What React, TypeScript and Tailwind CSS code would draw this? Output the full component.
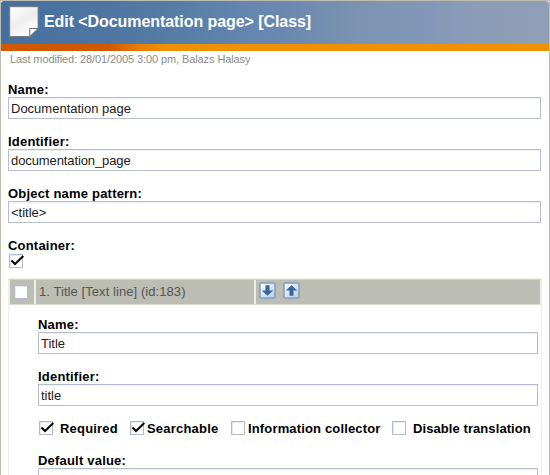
import React from 'react';

function Label({ children, tracking = 'tracking-[0.2px]' }: { children: React.ReactNode; tracking?: string }) {
  return <div className={`h-[15px] whitespace-nowrap text-[13px] font-bold leading-[15px] text-black ${tracking}`}>{children}</div>;
}

function Field({ value, tracking = 'tracking-[0px]' }: { value: string; tracking?: string }) {
  return (
    <div className={`h-[22px] whitespace-pre border border-[#b9bdd0] bg-white pl-[2px] text-[13px] leading-[21px] text-[#222] shadow-[inset_0_1px_0_#eef0f5] ${tracking}`}>
      {value}
    </div>
  );
}

function Check({ checked = false }: { checked?: boolean }) {
  return (
    <span className="block h-[14px] w-[14px] shrink-0 border border-[#b3bacb] bg-[#fdfdfe] shadow-[inset_1px_1px_0_#e6e9f0]">
      {checked && (
        <svg viewBox="0 0 14 12" className="block h-[12px] w-[14px] overflow-visible" fill="none" stroke="#080808" strokeWidth="2.1">
          <path d="M1.5 5.5 5 9 13.3 1" />
        </svg>
      )}
    </span>
  );
}

function Arrow({ up = false }: { up?: boolean }) {
  return (
    <svg viewBox="0 0 17 17" className="h-[17px] w-[17px]">
      <defs>
        <linearGradient id="button" x1="0" y1="0" x2="1" y2="1">
          <stop offset="0" stopColor="#fff" />
          <stop offset="1" stopColor="#b7cce3" />
        </linearGradient>
      </defs>
      <rect x="1" y="1" width="15" height="15" rx="1" fill="url(#button)" stroke="#7f9fc2" strokeWidth="1.5" />
      <path d="M6.5 3.2h4v5.3h3.7L8.5 13.8 2.8 8.5h3.7z" fill="#3a6699" transform={up ? 'rotate(180 8.5 8.5)' : undefined} />
    </svg>
  );
}

export default function App() {
  return (
    <div className="h-[475px] w-[550px] overflow-hidden border-l border-r border-t border-[#bdbdb0] bg-white font-['Liberation_Sans',Arial,sans-serif]">
      <header className="flex h-[43px] items-start rounded-t-[3px] bg-[linear-gradient(90deg,#456f9d_0%,#4f76a3_20%,#567da5_32%,#6586b1_46%,#6c89af_53%,#7b93b0_65%,#8398b8_78%,#8c9db7_88%,#8f9fb6_100%)] pl-2 pt-[5px]">
        <svg viewBox="0 0 30 32" className="h-[32px] w-[30px] shrink-0">
          <defs>
            <linearGradient id="paper" x1="0" y1="0" x2="0.6" y2="1">
              <stop offset="0" stopColor="#fff" />
              <stop offset="0.55" stopColor="#eeeeef" />
              <stop offset="1" stopColor="#fff" />
            </linearGradient>
          </defs>
          <path d="M.7.7h28.4v21.8l-8.3 8H.7z" fill="url(#paper)" stroke="#737b84" />
          <path d="M20.8 30.5v-8H29z" fill="#fff" stroke="#666d75" />
        </svg>
        <h1 className="ml-[5px] mt-[6px] whitespace-nowrap text-[16px] font-bold leading-5 tracking-[-0.07px] text-white">Edit &lt;Documentation page&gt; [Class]</h1>
      </header>
      <div className="h-[7px] bg-[linear-gradient(90deg,#d05800_0,#d05800_108px,#e87b08_135px,#f29100_165px)]" />
      <p className="ml-[9px] mt-[2px] h-[13px] whitespace-nowrap text-[11px] leading-[13px] tracking-[-0.1px] text-[#8b8b86]">Last modified: 28/01/2005 3:00 pm, Balazs Halasy</p>
      <main className="ml-[7px] mr-2 mt-[16px]">
        <section className="h-[52px]"><Label>Name:</Label><Field value="Documentation page" /></section>
        <section className="h-[52px]"><Label>Identifier:</Label><Field value="documentation_page" tracking="tracking-[-0.1px]" /></section>
        <section className="h-[52px]"><Label>Object name pattern:</Label><Field value="<title>" /></section>
        <section className="h-[40px]">
          <Label>Container:</Label>
          <div className="ml-px mt-px"><Check checked /></div>
        </section>
        <div className="-mr-px border border-[#efefe6]">
          <div className="flex h-[26px] gap-[2px] border-b border-t border-b-[#dcdcd1] border-t-[#d3d6c7] bg-[#eeeee6] pl-px pr-px">
            <div className="flex w-[24px] items-center bg-[#bcbdb4] pl-[4px]"><Check /></div>
            <div className="w-[218px] bg-[#bcbdb4] pl-[3px] text-[13px] leading-[24px] tracking-[0.07px] text-[#55564f]">1. Title [Text line] (id:183)</div>
            <div className="flex flex-1 gap-[7px] bg-[#bcbdb4] pl-[3px] pt-[2px]"><Arrow /><Arrow up /></div>
          </div>
          <div className="ml-[29px] mr-[3px] pt-[12px]">
            <section className="h-[52px]"><Label>Name:</Label><Field value="Title" /></section>
            <section className="h-[52px]"><Label>Identifier:</Label><Field value="title" /></section>
            <div className="flex h-[32px] items-start pl-px">
              <div className="flex w-[91px] gap-[7px]"><Check checked /><Label>Required</Label></div>
              <div className="flex w-[101px] gap-[3px]"><Check checked /><Label>Searchable</Label></div>
              <div className="flex w-[161px] gap-[3px]"><Check /><Label tracking="tracking-[0.15px]">Information collector</Label></div>
              <div className="flex gap-[7px]"><Check /><Label tracking="tracking-[0.08px]">Disable translation</Label></div>
            </div>
            <Label>Default value:</Label><Field value="" />
          </div>
        </div>
      </main>
    </div>
  );
}
